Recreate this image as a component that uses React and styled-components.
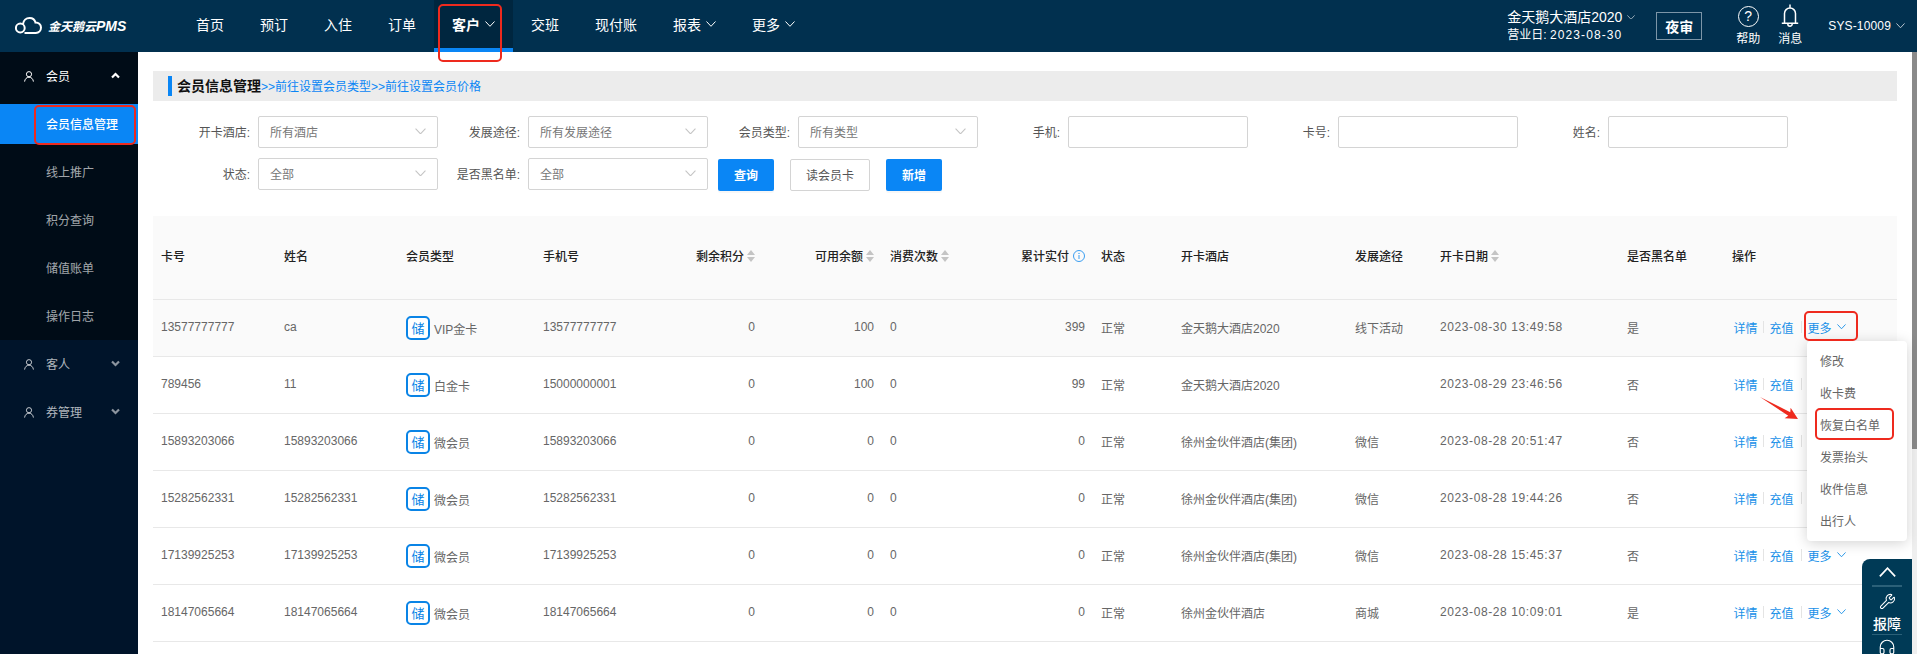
import React from 'react';
import styled, { createGlobalStyle } from 'styled-components';
import { Wrench, Headphones } from 'lucide-react';

const Global = createGlobalStyle`
  * { box-sizing: border-box; }
  html, body { margin: 0; padding: 0; background: #fff; }
  body { font-family: "Liberation Sans", "Noto Sans CJK SC", sans-serif; font-size: 12px; color: #666; }
`;

const RED = '#ee2a1e';
const BLUE = '#0a86f5';
const LINK = '#1890e8';

const Page = styled.div`
  position: relative; width: 1917px; height: 654px; overflow: hidden;
  display: flex; flex-direction: column;
`;
const Header = styled.header`
  height: 52px; flex: none; background: #01304f; color: #fff;
  display: flex; align-items: stretch; position: relative; z-index: 5;
`;
const Logo = styled.div`
  width: 178px; flex: none; display: flex; align-items: center; padding-left: 15px; gap: 6px; padding-bottom: 1px;
`;
const LogoText = styled.span`
  font-size: 12px; font-weight: 700; font-style: italic; white-space: nowrap;
  & b { font-size: 14px; font-weight: 700; }
`;
const Nav = styled.nav`display: flex; align-items: stretch;`;
const NavItem = styled.div`
  position: relative; display: flex; align-items: center; gap: 5px;
  padding: 0 18px 1px; font-size: 14px; white-space: nowrap;
  font-weight: ${p => (p.$active ? 700 : 400)};
  background: ${p => (p.$active ? '#00263f' : 'transparent')};
  border-bottom: 4px solid ${p => (p.$active ? BLUE : 'transparent')};
`;
const Mark = styled.span`
  position: absolute; z-index: 6; pointer-events: none;
  left: ${p => p.$l}px; top: ${p => p.$t}px; width: ${p => p.$w}px; height: ${p => p.$h}px;
  border: 2px solid ${RED}; border-radius: 5px;
`;
const Tools = styled.div`margin-left: auto; display: flex; align-items: center; padding-right: 12px;`;
const Hotel = styled.div`display: flex; flex-direction: column; width: 131px; margin-right: 18px;`;
const HotelName = styled.div`
  font-size: 14px; line-height: 18px; display: flex; align-items: center; gap: 5px; white-space: nowrap;
`;
const HotelDate = styled.div`font-size: 12px; line-height: 18px; white-space: nowrap;`;
const HotelDay = styled.span`letter-spacing: 1.1px;`;
const AuditButton = styled.div`
  width: 46px; height: 28px; border: 1px solid #7c95a8; margin-right: 34px;
  display: flex; align-items: center; justify-content: center; font-size: 14px; font-weight: 700;
  margin-top: -1px;
`;
const ToolStack = styled.div`
  width: 24px; margin-right: ${p => p.$mr}px; display: flex; flex-direction: column; align-items: center;
  align-self: flex-start; padding-top: 2px;
`;
const ToolIcon = styled.div`height: 28px; display: flex; align-items: center; justify-content: center;`;
const ToolLabel = styled.div`line-height: 16px; font-size: 12px; white-space: nowrap; margin-top: 1px;`;
const HelpCircle = styled.span`
  width: 21px; height: 21px; border: 1.5px solid #fff; border-radius: 50%;
  display: flex; align-items: center; justify-content: center; font-size: 14px; line-height: 1;
`;
const UserName = styled.div`display: flex; align-items: center; gap: 5px; white-space: nowrap; letter-spacing: .15px;`;

const Body = styled.div`flex: 1; display: flex; min-height: 0;`;
const Sidebar = styled.aside`width: 138px; flex: none; background: #00142a; color: rgba(255,255,255,.65);`;
const OpenGroup = styled.div`background: #000c17;`;
const GroupRow = styled.div`
  height: 48px; display: flex; align-items: center; padding-left: 24px; gap: 12px; position: relative;
  color: ${p => (p.$open ? '#fff' : 'rgba(255,255,255,.7)')};
`;
const GroupName = styled.span`padding-bottom: 2px;`;
const GroupArrow = styled.span`position: absolute; left: 111px; top: 20px; display: flex;`;
const SubList = styled.div`display: flex; flex-direction: column; gap: 8px; padding: 4px 0;`;
const SubItem = styled.div`
  position: relative; height: 40px; padding: 0 0 2px 46px; display: flex; align-items: center;
  background: ${p => (p.$active ? BLUE : 'transparent')};
  color: ${p => (p.$active ? '#fff' : 'rgba(255,255,255,.65)')};
  font-weight: ${p => (p.$active ? 500 : 400)};
`;

const Main = styled.main`flex: 1; padding: 19px 15px 0; min-width: 0;`;
const TitleBar = styled.div`
  height: 30px; background: #ececec; padding-left: 15px; display: flex; align-items: center;
`;
const TitleAccent = styled.span`width: 4px; height: 20px; background: ${BLUE}; margin-right: 5px;`;
const Title = styled.span`font-size: 14px; font-weight: 700; color: #111; padding-bottom: 2px;`;
const TitleLink = styled.span`color: ${BLUE}; padding-bottom: 1px;`;
const Filters = styled.div`
  margin-top: 15px; padding-left: 15px; display: flex; flex-direction: column; gap: 10px;
`;
const FilterRow = styled.div`display: flex; align-items: flex-start;`;
const Field = styled.div`width: 270px; flex: none; display: flex; align-items: center; gap: 8px;`;
const Label = styled.label`width: 82px; text-align: right; color: #555; white-space: nowrap; padding-bottom: 2px;`;
const Control = styled.div`
  width: 180px; height: 32px; border: 1px solid #d4d4d4; border-radius: 2px; background: #fff;
  display: flex; align-items: center; justify-content: space-between; padding: 0 11px 2px; color: #777;
`;
const Buttons = styled.div`display: flex; gap: 16px; margin-left: 10px;`;
const Button = styled.div`
  width: ${p => p.$w}px; height: 32px; margin-top: 1px; padding-bottom: 2px; border-radius: 2px;
  display: flex; align-items: center; justify-content: center;
  background: ${p => (p.$primary ? BLUE : '#fff')};
  color: ${p => (p.$primary ? '#fff' : '#555')};
  border: ${p => (p.$primary ? 'none' : '1px solid #d4d4d4')};
  font-weight: ${p => (p.$primary ? 700 : 400)};
  box-shadow: ${p => (p.$primary ? '0 2px 0 rgba(0,0,0,.03)' : 'none')};
`;

const COLS = '123px 122px 137px 125px 103px 119px 118px 93px 80px 174px 85px 187px 105px 173px';
const Table = styled.div`margin-top: 25px;`;
const HeadRow = styled.div`
  display: grid; grid-template-columns: ${COLS}; height: 84px; background: #fafafa; padding-bottom: 2px;
  border-bottom: 1px solid #e8e8e8; align-items: center; color: #222; font-weight: 500;
`;
const Row = styled.div`
  position: relative; z-index: ${p => (p.$top ? 3 : 1)};
  display: grid; grid-template-columns: ${COLS}; height: 57px; align-items: center;
  border-bottom: 1px solid #e8e8e8; background: ${p => (p.$hover ? '#fafafa' : '#fff')};
`;
const Cell = styled.div`
  padding: 0 8px 2px; white-space: nowrap; display: flex; align-items: center;
  justify-content: ${p => (p.$right ? 'flex-end' : 'flex-start')};
  gap: ${p => p.$gap || 0}px;
  letter-spacing: ${p => (p.$date ? '.6px' : '0')};
`;
const Badge = styled.span`
  width: 24px; height: 24px; flex: none; border: 2px solid #0a84e6; border-radius: 5px; color: #0a84e6;
  display: flex; align-items: center; justify-content: center; font-size: 13px; background: #fff;
  padding-bottom: 1px; margin-top: 1px;
`;
const TypeName = styled.span`padding-top: 2px;`;
const Action = styled.span`color: ${LINK}; white-space: nowrap;`;
const Sep = styled.span`width: 1px; height: 12px; background: #e4e4e4; margin: 0 5.5px 0 ${p => p.$l}px;`;
const ActionCell = styled(Cell)`padding-left: 9.5px; position: relative;`;
const MoreWrap = styled.span`position: relative; display: flex; align-items: center; gap: 5px;`;

const Dropdown = styled.div`
  position: absolute; top: 41px; right: -10px; width: 100px; background: #fff; border-radius: 4px; padding: 4px 0;
  box-shadow: 0 2px 14px rgba(0,0,0,.18); z-index: 4;
`;
const DropItem = styled.div`
  position: relative; height: 32px; padding: 0 0 2px 13px; display: flex; align-items: center; color: #666;
`;
const Arrow = styled.svg`position: absolute; left: -52px; top: 51px; display: block;`;

const Scrollbar = styled.div`width: 5px; flex: none; background: #efefef;`;
const Thumb = styled.div`height: 397px; background: #8a8a8a;`;

const Widget = styled.div`
  position: absolute; left: 1862px; top: 559px; width: 50px; height: 95px; overflow: hidden; z-index: 6;
  background: #003a56; color: #fff; border-radius: 8px 0 0 0;
  display: flex; flex-direction: column; align-items: center;
`;
const WidgetSlot = styled.div`
  height: ${p => p.$h}px; display: flex; align-items: center; justify-content: center; flex: none;
`;
const WidgetLine = styled.div`width: 30px; height: 1.5px; background: #2b6078; flex: none;`;
const WidgetText = styled.div`font-size: 14px; font-weight: 500; line-height: 18px; height: 18px; flex: none; margin-top: -1px; margin-bottom: 1px;`;

const Chevron = ({ size = 9, color = 'currentColor', width = 1, up }) => (
  <svg width={size} height={size * 0.6} viewBox="0 0 10 6" fill="none" style={{ display: 'block', flex: 'none' }}>
    <path d={up ? 'M.5 5.5 5 .7 9.5 5.5' : 'M.5.5 5 5.3 9.5.5'} stroke={color} strokeWidth={width} />
  </svg>
);
const Caret = ({ up, color }) => (
  <svg width="9" height="7" viewBox="0 0 9 7" fill="none" style={{ display: 'block' }}>
    <path d={up ? 'M1 5.5 4.5 2 8 5.5' : 'M1 1.5 4.5 5 8 1.5'} stroke={color} strokeWidth="2.2" />
  </svg>
);
const Person = ({ color }) => (
  <svg width="10" height="11" viewBox="0 0 10 11" fill="none" style={{ display: 'block', flex: 'none' }}>
    <circle cx="5" cy="3.2" r="2.6" stroke={color} />
    <path d="M.6 10.6c.2-2.6 2-4.4 4.4-4.4s4.2 1.8 4.4 4.4" stroke={color} />
  </svg>
);
const Cloud = () => (
  <svg width="27" height="17" viewBox="0 0 27 17" fill="none" style={{ display: 'block', flex: 'none' }}>
    <circle cx="5.3" cy="11" r="4.4" stroke="#fff" strokeWidth="2" />
    <path d="M8 7.2C8.4 3.6 11 1 14.6 1c3 0 5.2 1.9 5.9 4.6 2.8-.2 5.5 1.9 5.5 5 0 2.8-2.1 5.3-5.2 5.3H9.5" stroke="#fff" strokeWidth="2" />
  </svg>
);
const Bell = () => (
  <svg width="18" height="24" viewBox="0 0 18 24" fill="none" style={{ display: 'block' }}>
    <path d="M9 .5v3M3.5 19V9.5a5.5 5.5 0 0 1 11 0V19M.8 19.3h16.400M6.800 20a2.200 2.200 0 0 0 4.400 0" stroke="#fff" strokeWidth="1.5" />
  </svg>
);
const Sort = () => (
  <svg width="8" height="12" viewBox="0 0 8 12" style={{ display: 'block', flex: 'none' }}>
    <path d="M4 0 8 5H0zM0 7h8l-4 5z" fill="#c4c4c4" />
  </svg>
);
const Info = () => (
  <svg width="12" height="12" viewBox="0 0 12 12" fill="none" style={{ display: 'block', flex: 'none' }}>
    <circle cx="6" cy="6" r="5.5" stroke="#3a9df0" />
    <path d="M6 5v4" stroke="#3a9df0" />
    <circle cx="6" cy="3.4" r=".7" fill="#3a9df0" />
  </svg>
);

const NAV = [
  ['首页'], ['预订'], ['入住'], ['订单'], ['客户', true, true], ['交班'], ['现付账'], ['报表', true], ['更多', true],
];
const HEAD = [
  ['卡号'], ['姓名'], ['会员类型'], ['手机号'], ['剩余积分', 'r', 's'], ['可用余额', 'r', 's'], ['消费次数', 'l', 's'],
  ['累计实付', 'r', 'i'], ['状态'], ['开卡酒店'], ['发展途径'], ['开卡日期', 'l', 's'], ['是否黑名单'], ['操作'],
];
const ROWS = [
  ['13577777777', 'ca', 'VIP金卡', '13577777777', '0', '100', '0', '399', '正常', '金天鹅大酒店2020', '线下活动', '2023-08-30 13:49:58', '是'],
  ['789456', '11', '白金卡', '15000000001', '0', '100', '0', '99', '正常', '金天鹅大酒店2020', '', '2023-08-29 23:46:56', '否'],
  ['15893203066', '15893203066', '微会员', '15893203066', '0', '0', '0', '0', '正常', '徐州金伙伴酒店(集团)', '微信', '2023-08-28 20:51:47', '否'],
  ['15282562331', '15282562331', '微会员', '15282562331', '0', '0', '0', '0', '正常', '徐州金伙伴酒店(集团)', '微信', '2023-08-28 19:44:26', '否'],
  ['17139925253', '17139925253', '微会员', '17139925253', '0', '0', '0', '0', '正常', '徐州金伙伴酒店(集团)', '微信', '2023-08-28 15:45:37', '否'],
  ['18147065664', '18147065664', '微会员', '18147065664', '0', '0', '0', '0', '正常', '徐州金伙伴酒店', '商城', '2023-08-28 10:09:01', '是'],
];
const MENU = ['修改', '收卡费', '恢复白名单', '发票抬头', '收件信息', '出行人'];
const SUBS = ['会员信息管理', '线上推广', '积分查询', '储值账单', '操作日志'];

const FieldSelect = ({ label, value }) => (
  <Field>
    <Label>{label}:</Label>
    <Control>{value}<Chevron size={11} color="#c4c4c4" /></Control>
  </Field>
);
const FieldInput = ({ label }) => (
  <Field>
    <Label>{label}:</Label>
    <Control />
  </Field>
);

export default function App() {
  return (
    <Page>
      <Global />
      <Header>
        <Logo>
          <Cloud />
          <LogoText>金天鹅云<b>PMS</b></LogoText>
        </Logo>
        <Nav>
          {NAV.map(([t, chev, active]) => (
            <NavItem key={t} $active={active}>
              {t}
              {chev && <Chevron size={10} />}
              {active && <Mark $l={3.5} $t={4} $w={64.5} $h={58} />}
            </NavItem>
          ))}
        </Nav>
        <Tools>
          <Hotel>
            <HotelName>金天鹅大酒店2020 <Chevron size={8} color="#b9c6d0" /></HotelName>
            <HotelDate>营业日: <HotelDay>2023-08-30</HotelDay></HotelDate>
          </Hotel>
          <AuditButton>夜审</AuditButton>
          <ToolStack $mr={18}>
            <ToolIcon><HelpCircle>?</HelpCircle></ToolIcon>
            <ToolLabel>帮助</ToolLabel>
          </ToolStack>
          <ToolStack $mr={26}>
            <ToolIcon><Bell /></ToolIcon>
            <ToolLabel>消息</ToolLabel>
          </ToolStack>
          <UserName>SYS-10009 <Chevron size={9} color="#c9d3db" /></UserName>
        </Tools>
      </Header>
      <Body>
        <Sidebar>
          <OpenGroup>
            <GroupRow $open>
              <Person color="#fff" /><GroupName>会员</GroupName>
              <GroupArrow><Caret up color="#fff" /></GroupArrow>
            </GroupRow>
            <SubList>
              {SUBS.map((s, i) => (
                <SubItem key={s} $active={i === 0}>
                  {s}
                  {i === 0 && <Mark $l={33.5} $t={1} $w={102} $h={40} />}
                </SubItem>
              ))}
            </SubList>
          </OpenGroup>
          <GroupRow>
            <Person color="rgba(255,255,255,.75)" /><GroupName>客人</GroupName>
            <GroupArrow><Caret color="rgba(255,255,255,.55)" /></GroupArrow>
          </GroupRow>
          <GroupRow>
            <Person color="rgba(255,255,255,.75)" /><GroupName>券管理</GroupName>
            <GroupArrow><Caret color="rgba(255,255,255,.55)" /></GroupArrow>
          </GroupRow>
        </Sidebar>
        <Main>
          <TitleBar>
            <TitleAccent />
            <Title>会员信息管理</Title>
            <TitleLink>&gt;&gt;前往设置会员类型&gt;&gt;前往设置会员价格</TitleLink>
          </TitleBar>
          <Filters>
            <FilterRow>
              <FieldSelect label="开卡酒店" value="所有酒店" />
              <FieldSelect label="发展途径" value="所有发展途径" />
              <FieldSelect label="会员类型" value="所有类型" />
              <FieldInput label="手机" />
              <FieldInput label="卡号" />
              <FieldInput label="姓名" />
            </FilterRow>
            <FilterRow>
              <FieldSelect label="状态" value="全部" />
              <FieldSelect label="是否黑名单" value="全部" />
              <Buttons>
                <Button $primary $w={56}>查询</Button>
                <Button $w={80}>读会员卡</Button>
                <Button $primary $w={56}>新增</Button>
              </Buttons>
            </FilterRow>
          </Filters>
          <Table>
            <HeadRow>
              {HEAD.map(([t, align, icon]) => (
                <Cell key={t} $right={align === 'r'} $gap={icon === 'i' ? 4 : 3}>
                  {t}
                  {icon === 's' && <Sort />}
                  {icon === 'i' && <Info />}
                </Cell>
              ))}
            </HeadRow>
            {ROWS.map((r, idx) => (
              <Row key={r[0]} $hover={idx === 0} $top={idx === 0}>
                <Cell>{r[0]}</Cell>
                <Cell>{r[1]}</Cell>
                <Cell $gap={4}><Badge>储</Badge><TypeName>{r[2]}</TypeName></Cell>
                <Cell>{r[3]}</Cell>
                <Cell $right>{r[4]}</Cell>
                <Cell $right>{r[5]}</Cell>
                <Cell>{r[6]}</Cell>
                <Cell $right>{r[7]}</Cell>
                <Cell>{r[8]}</Cell>
                <Cell>{r[9]}</Cell>
                <Cell>{r[10]}</Cell>
                <Cell $date>{r[11]}</Cell>
                <Cell>{r[12]}</Cell>
                <ActionCell>
                  <Action>详情</Action>
                  <Sep $l={5.5} />
                  <Action>充值</Action>
                  <Sep $l={7.5} />
                  <MoreWrap>
                    <Action>更多</Action>
                    <Chevron size={9} color={LINK} />
                    {idx === 0 && <Mark $l={-4} $t={-8} $w={54} $h={30} />}
                  </MoreWrap>
                </ActionCell>
                {idx === 0 && (
                  <Dropdown>
                    <Arrow width="45" height="32" viewBox="0 0 45 32">
                      <polygon points="5,5 33.3,23.7 29.6,26.2 43,27 35.6,15.8 35.3,20.3" fill={RED} />
                    </Arrow>
                    {MENU.map(m => (
                      <DropItem key={m}>
                        {m}
                        {m === '恢复白名单' && <Mark $l={8} $t={-1} $w={79} $h={32} />}
                      </DropItem>
                    ))}
                  </Dropdown>
                )}
              </Row>
            ))}
          </Table>
        </Main>
        <Scrollbar><Thumb /></Scrollbar>
      </Body>
      <Widget>
        <WidgetSlot $h={26}><Chevron size={17} width={1} up /></WidgetSlot>
        <WidgetLine />
        <WidgetSlot $h={29}><Wrench size={17} strokeWidth={1.5} /></WidgetSlot>
        <WidgetText>报障</WidgetText>
        <WidgetLine />
        <WidgetSlot $h={24}><Headphones size={18} strokeWidth={1.5} /></WidgetSlot>
      </Widget>
    </Page>
  );
}
